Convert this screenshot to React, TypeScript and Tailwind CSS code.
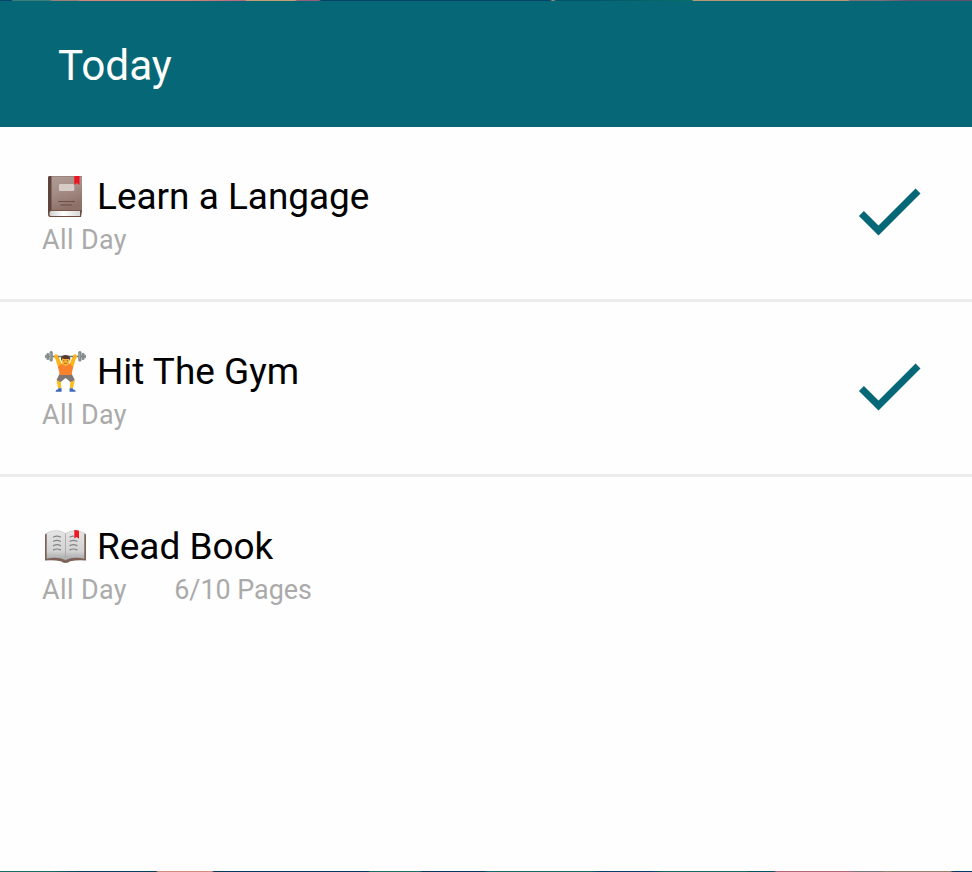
import type { ReactNode } from 'react';

function ClosedBook() {
  return (
    <svg viewBox="0 0 41 44" className="h-[44px] w-[41px]">
      <defs>
        <linearGradient id="cover" x1="0" y1="0" x2="0.3" y2="1">
          <stop offset="0" stopColor="#b09c95" />
          <stop offset="0.5" stopColor="#a48d85" />
          <stop offset="1" stopColor="#8d7169" />
        </linearGradient>
        <linearGradient id="leaf" x1="0" y1="0" x2="1" y2="0">
          <stop offset="0" stopColor="#d0d0d0" />
          <stop offset="0.45" stopColor="#ffffff" />
          <stop offset="1" stopColor="#d8d8d8" />
        </linearGradient>
      </defs>
      <path d="M5 1H37V36L36 42H5Q3 42 3 39V3Q3 1 5 1Z" fill="#6f4c42" />
      <path d="M6 1.300H37V35.300H6Z" fill="url(#cover)" />
      <path d="M3 3Q3 1 5 1H6.500V35Q4 35 3 38Z" fill="#5f443c" />
      <path d="M6 36H35V41H5.500Q4.500 40.500 4.500 38.500Q4.500 36 6 36Z" fill="url(#leaf)" />
      <rect x="14" y="9" width="15.300" height="7" rx="0.800" fill="#d6cbc7" />
      <path d="M13.500 26.500H29.500M16 30H26.500" stroke="#6d4d43" strokeWidth="1.100" strokeLinecap="round" />
      <path d="M29.300 1H34.500V10L31.900 8L29.300 10Z" fill="#ed1522" />
    </svg>
  );
}

function Lifter() {
  return (
    <svg viewBox="0 0 41 44" className="h-[44px] w-[41px]">
      <path d="M9.500 6L13.300 18L17.500 15.500L12.700 5Z M31.700 6L27.900 18L23.700 15.500L28.500 5Z" fill="#fcb61b" />
      <path d="M4 6.500H37" stroke="#6f797c" strokeWidth="1.300" />
      <g fill="#858c8d">
        <rect x="0" y="4.800" width="1.800" height="3.500" rx="0.800" />
        <rect x="1.500" y="3" width="2.800" height="7" rx="1.300" />
        <rect x="4.500" y="1" width="3.300" height="10.500" rx="1.500" />
        <rect x="39.200" y="4.800" width="1.800" height="3.500" rx="0.800" />
        <rect x="36.700" y="3" width="2.800" height="7" rx="1.300" />
        <rect x="33.200" y="1" width="3.300" height="10.500" rx="1.500" />
      </g>
      <path d="M5.700 3V9M34.300 3V9" stroke="#a7adaf" strokeWidth="0.800" />
      <rect x="9.200" y="4.300" width="3.800" height="4.500" rx="1.800" fill="#fcb61b" />
      <rect x="28.200" y="4.300" width="3.800" height="4.500" rx="1.800" fill="#fcb61b" />
      <path d="M14 28L11.500 31L13.300 38.500H16.300L15.800 32L19 28Z M27 28L29.700 31L27.800 38.500H24.800L25.300 32L22 28Z" fill="#fcbd20" />
      <path d="M14.700 23.500H26.500L29.800 30L25.600 32L20.600 28L15.700 32L11.500 30Z" fill="#7d7672" />
      <path d="M12.900 16.800Q15.500 14 18 13.500H23.500Q26 14 28.300 16.800L26.300 25H14.900Z" fill="#f8822c" />
      <path d="M16.700 7Q20.600 4 24.500 7V11Q24 15.700 20.600 15.700Q17.200 15.700 16.700 11Z" fill="#fdb52d" />
      <path d="M16.200 11Q14.700 5.500 20.500 5Q26.500 5 25 11L24 8.800Q20 9.500 17.500 8.200Z" fill="#543930" />
      <circle cx="18.900" cy="10.700" r="0.550" fill="#4a342c" />
      <circle cx="22.300" cy="10.700" r="0.550" fill="#4a342c" />
      <path d="M18.900 13Q20.600 14 22.300 13" stroke="#795548" strokeWidth="0.800" fill="none" />
      <path d="M13.200 38.300H16.600V41.800H10.500Q10.500 39.600 13.200 39.200Z M24.600 38.300H27.900V39.200Q30.600 39.600 30.800 41.800H24.600Z" fill="#3d68b6" />
    </svg>
  );
}

function OpenBook() {
  return (
    <svg viewBox="0 -3.500 41 44" className="h-[44px] w-[41px]">
      <defs>
        <linearGradient id="sheets" x1="0" y1="0" x2="0" y2="1">
          <stop offset="0" stopColor="#e5e5e5" />
          <stop offset="0.7" stopColor="#d2d2d2" />
          <stop offset="1" stopColor="#a0a0a0" />
        </linearGradient>
      </defs>
      <path d="M1 5H40Q41 5 41 7V32Q33 31 25 32.800Q23.500 34.500 20.500 34.500Q17.500 34.500 16 32.800Q8 31 0 32V7Q0 5 1 5Z" fill="#7d6157" />
      <path d="M1.700 4.500Q12 -0.500 20.500 5Q29 -0.500 39.300 4.500V30.200Q28 27.700 20.500 31.700Q13 27.700 1.700 30.200Z" fill="url(#sheets)" />
      <path d="M1.700 4.500Q12 -0.500 20.500 5Q29 -0.500 39.300 4.500" stroke="#c9c9c9" strokeWidth="0.700" fill="none" />
      <path d="M20.500 5V31.700" stroke="#a5a5a5" strokeWidth="0.800" />
      <path d="M2 28.700Q13 26.200 20.500 30.200Q28 26.200 39 28.700" stroke="#bcbcbc" strokeWidth="0.800" fill="none" />
      <g stroke="#858585" strokeWidth="1.200" fill="none" strokeLinecap="round">
        <path d="M8.500 8.500Q12 6.700 15.500 8.500M8.500 12.800Q12 11 15.500 12.800M8.500 17.100Q12 15.300 15.500 17.100M8.500 21.400Q12 19.600 15.500 21.400" />
        <path d="M25 8.500Q27 7.500 28.500 7.600M25 12.800Q28.500 11 32 12.800M25 17.100Q28.500 15.300 32 17.100M25 21.400Q28.500 19.600 32 21.400" />
      </g>
      <path d="M29.300 1.600Q31.500 1.500 34 2.200V10.300L31.600 8.500L29.300 10.100Z" fill="#f01820" />
    </svg>
  );
}

type RowProps = { icon: ReactNode; title: string; detail?: string; done?: boolean; last?: boolean };

function HabitRow({ icon, title, detail, done, last }: RowProps) {
  return (
    <li className={`flex h-[175px] items-start justify-between pr-[41px] pl-[42px] pt-[42px] ${last ? '' : 'border-b-[3px] border-[#ececec]'}`}>
      <div className="pt-[6px]">
        <div className="flex h-[44px] items-center pl-[3px]">
          {icon}
          <span className="ml-[11px] whitespace-nowrap text-[36.95px] leading-[44px] text-black">{title}</span>
        </div>
        <div className="flex h-[42px] items-center gap-[47.3px] text-[26.9px] leading-[42px] text-[#aaaaaa]">
          <span className="tracking-[0.4px]">All Day</span>
          {detail && <span>{detail}</span>}
        </div>
      </div>
      {done && (
        <svg viewBox="0 0 24 24" className="size-[84px]" fill="#066776">
          <path d="M9 16.170L4.830 12L3.410 13.410L9 19L21 7L19.590 5.590Z" />
        </svg>
      )}
    </li>
  );
}

export default function App() {
  return (
    <div className="flex h-[872px] w-[972px] flex-col overflow-hidden bg-[#fefefe] font-['Roboto',sans-serif]">
      <div className="h-px shrink-0 bg-[linear-gradient(90deg,#07476a_0_12px,#3b8078_12px_50px,#9c8276_52px_78px,#d28579_80px_190px,#b76780_245px,#c1a078_247px_295px,#965f7b_297px_319px,#064467_321px_550px,#b0a080_553px,#065268_556px_590px,#067065_692px,#b99878_693px_848px,#7b7177_850px_880px,#61516e_910px)]" />
      <header className="flex h-[126px] shrink-0 items-center bg-[#066776] pt-[3px] pl-[58px]">
        <h1 className="text-[42.3px] leading-[50px] text-white">Today</h1>
      </header>
      <ul className="flex-1">
        <HabitRow icon={<ClosedBook />} title="Learn a Langage" done />
        <HabitRow icon={<Lifter />} title="Hit The Gym" done />
        <HabitRow icon={<OpenBook />} title="Read Book" detail="6/10 Pages" last />
      </ul>
      <div className="h-px shrink-0 bg-[linear-gradient(90deg,#176c6b_0_50px,#07405f_80px_156px,#d08e80_158px_212px,#07395e_214px_368px,#1b7068_370px_420px,#07395e_422px_484px,#146b6b_488px_590px,#073f67_600px_650px,#146b6b_665px_745px,#075064_750px_774px,#b16979_776px_850px,#75777d_855px_880px,#94826f_885px_950px,#073965_953px)]" />
    </div>
  );
}
